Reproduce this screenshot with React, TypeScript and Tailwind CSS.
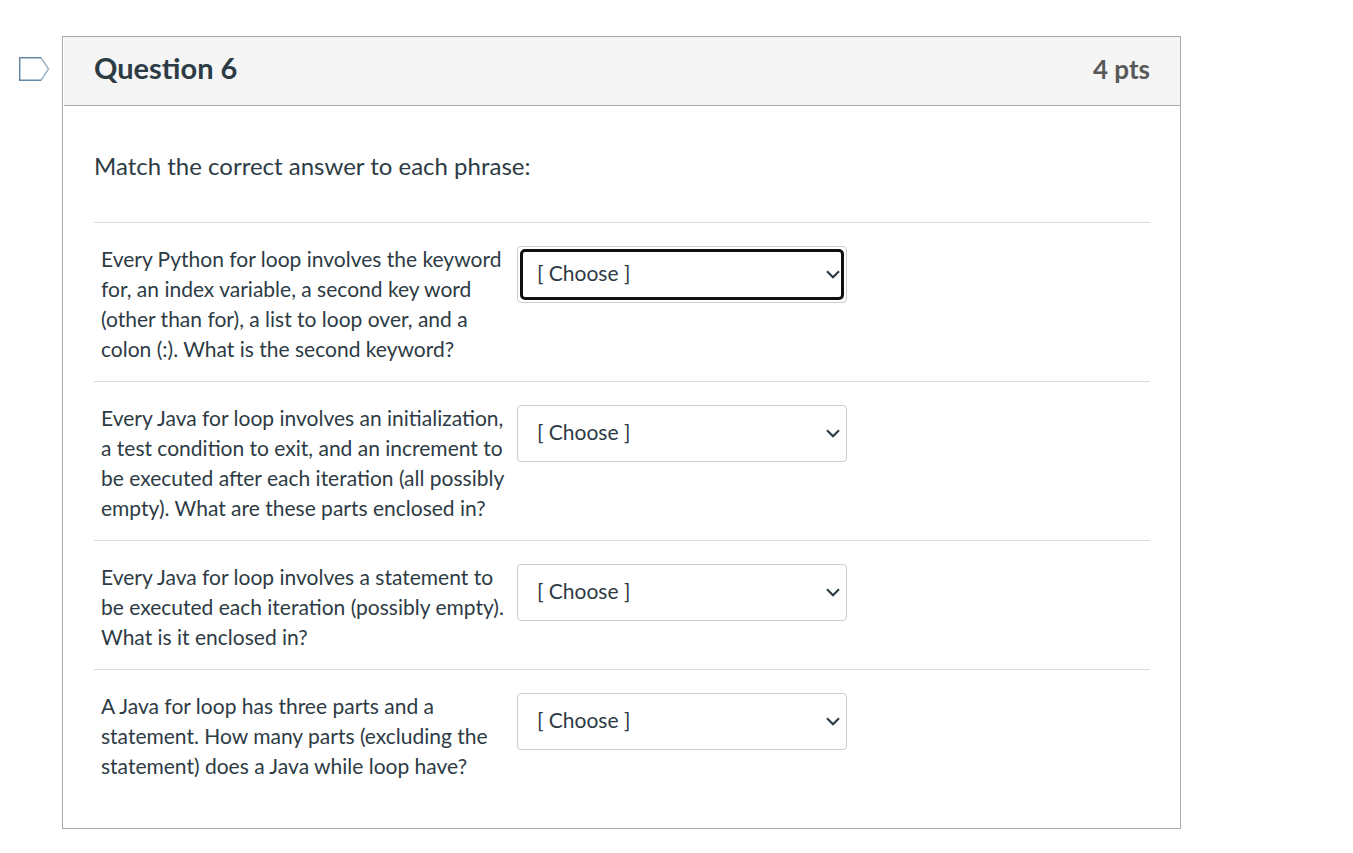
type MatchItem = { id: string; text: string };

const answers = ["in", "parentheses", "curly braces", "square brackets", "one", "two"];

const items: MatchItem[] = [
  {
    id: "python-keyword",
    text: "Every Python for loop involves the keyword for, an index variable, a second key word (other than for), a list to loop over, and a colon (:). What is the second keyword?",
  },
  {
    id: "java-parts",
    text: "Every Java for loop involves an initialization, a test condition to exit, and an increment to be executed after each iteration (all possibly empty). What are these parts enclosed in?",
  },
  {
    id: "java-statement",
    text: "Every Java for loop involves a statement to be executed each iteration (possibly empty). What is it enclosed in?",
  },
  {
    id: "java-while",
    text: "A Java for loop has three parts and a statement. How many parts (excluding the statement) does a Java while loop have?",
  },
];

const FlagButton = () => (
  <button type="button" aria-label="Flag question" className="mt-5 h-[26px] w-8 shrink-0">
    <svg viewBox="0 0 32 26" className="h-full w-full" fill="none">
      <path d="M23 1.7 L30.5 13 L23 24.3" stroke="#9bb3c6" strokeWidth="1.5" />
      <path d="M23 1.7 H1.7 V24.3 H23" stroke="#6688a4" strokeWidth="1.5" />
    </svg>
  </button>
);

const MatchRow = ({ item, focused }: { item: MatchItem; focused: boolean }) => (
  <div className="flex items-start border-t border-[#dddddd] px-[7px] pt-[21px] pb-[17px]">
    <label htmlFor={item.id} className="w-[416px] shrink-0 pr-2 text-[21px] leading-[30px]">
      {item.text}
    </label>
    <div className="relative mt-0.5 w-[330px] rounded-[4px] border border-[#c7cdd1] bg-white p-0.5">
      <select
        id={item.id}
        autoFocus={focused}
        defaultValue=""
        className="block h-[51px] w-full appearance-none rounded-[5px] border-[3px] border-transparent bg-white pr-8 pb-1 pl-[14px] text-[21px] outline-none focus:border-[#101010]"
      >
        <option value="">[ Choose ]</option>
        {answers.map((answer) => (
          <option key={answer} value={answer}>
            {answer}
          </option>
        ))}
      </select>
      <svg
        viewBox="0 0 14 9"
        className="pointer-events-none absolute top-[23px] right-[6px] h-[9px] w-[14px]"
        fill="none"
        stroke="#2d3b45"
        strokeWidth="2.2"
      >
        <path d="M1 1.3 L7 7.3 L13 1.3" />
      </svg>
    </div>
  </div>
);

const App = () => {
  return (
    <main className="min-h-screen bg-white font-['Lato',sans-serif] text-[#2d3b45]">
      <div className="flex items-start pt-9 pr-[172px] pb-6 pl-[18px]">
        <FlagButton />

        <section className="ml-3 min-w-0 flex-1 border border-[#aaaaaa]">
          {/* Header */}
          <header className="ml-px flex h-[69px] items-center justify-between border-b border-[#aaaaaa] bg-[#f5f5f5] px-[30px] pb-1">
            <h2 className="pb-0.5 text-[29px] font-bold">Question 6</h2>
            <span className="text-[26px] font-bold text-[#595959]">4 pts</span>
          </header>

          {/* Body */}
          <div className="px-[31px] pt-[42px] pr-[30px] pb-[30px]">
            <p className="mb-[38px] text-2xl leading-9">Match the correct answer to each phrase:</p>
            {items.map((item, i) => (
              <MatchRow key={item.id} item={item} focused={i === 0} />
            ))}
          </div>
        </section>
      </div>
    </main>
  );
};

export default App;
